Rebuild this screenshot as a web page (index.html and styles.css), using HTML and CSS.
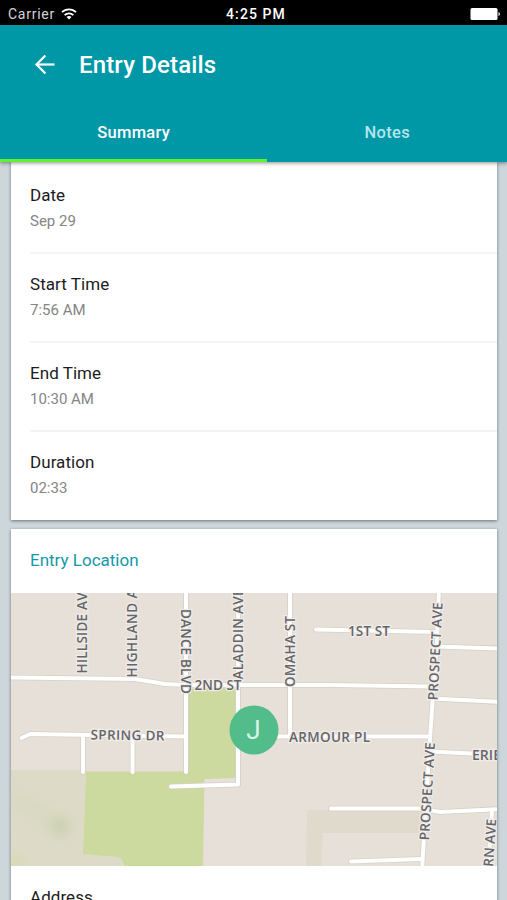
FILE: index.html
```html
<!DOCTYPE html>
<html lang="en">
<head>
  <meta charset="UTF-8" />
  <meta name="viewport" content="width=device-width, initial-scale=1.0" />
  <title>Entry Details</title>
  <link rel="stylesheet" href="styles.css">
</head>
<body>
  <div class="status-bar">
    <div class="status-left">
      <span class="carrier">Carrier</span>
      <svg class="wifi" width="16" height="12" viewBox="0 0 16 12" fill="none" stroke="#fff" stroke-width="1.8">
        <path d="M1 4.2a10 10 0 0 1 14 0" />
        <path d="M3.6 7.1a6.3 6.3 0 0 1 8.8 0" />
        <path d="M8 11.6 5.5 9.1a3.6 3.6 0 0 1 5 0z" fill="#fff" stroke="none" />
      </svg>
    </div>
    <span class="clock">4:25 PM</span>
    <svg class="battery" width="31" height="12" viewBox="0 0 31 12" fill="#fff">
      <rect x="0.5" y="0" width="27" height="12" rx="1.5" />
      <path d="M28.5 4v4c1.8-.5 1.8-3.5 0-4z" />
    </svg>
  </div>

  <header>
    <div class="toolbar">
      <svg class="back" width="20" height="20" viewBox="0 0 20 20" fill="none" stroke="#fff" stroke-width="2.2">
        <path d="M19.5 9.500H2" />
        <path d="M10.400 .5 1.500 9.500l8.900 9" />
      </svg>
      <h1>Entry Details</h1>
    </div>
    <nav>
      <a class="tab active">Summary</a>
      <a class="tab">Notes</a>
    </nav>
  </header>

  <main>
    <section class="card">
      <div class="item">
        <p class="label">Date</p>
        <p class="value">Sep 29</p>
      </div>
      <div class="item">
        <p class="label">Start Time</p>
        <p class="value">7:56 AM</p>
      </div>
      <div class="item">
        <p class="label">End Time</p>
        <p class="value">10:30 AM</p>
      </div>
      <div class="item">
        <p class="label">Duration</p>
        <p class="value">02:33</p>
      </div>
    </section>

    <section class="card location">
      <h2>Entry Location</h2>
      <svg class="map" width="486" height="273" viewBox="11 593 486 273">
        <defs>
          <filter id="soft" x="-80%" y="-80%" width="260%" height="260%"><feGaussianBlur stdDeviation="6" /></filter>
          <g id="roads">
            <path d="M5 677.500 L135 679 L165 684 L186 685 H330 L430 686.500" />
            <path d="M186 588V772" />
            <path d="M238 588V784.500L171 786.500" />
            <path d="M290 588V736" />
            <path d="M316 629.500L436 632" />
            <path d="M439 588L437 640L430 738L422 870" />
            <path d="M436 646.500L500 648.500" />
            <path d="M432 698.500L500 702" />
            <path d="M21.500 738L30 734L186 736.500" />
            <path d="M83 735V772" />
            <path d="M132.500 736V772" />
            <path d="M270 736.500H430" />
            <path d="M430 751.500L500 755" />
            <path d="M331 808.500L420 808.500L440 812L500 809" />
            <path d="M492 810L488 870" />
            <path d="M351 861.500L422 859" />
          </g>
        </defs>
        <rect x="11" y="593" width="486" height="273" fill="#e7e0d8" />

        <!-- parks -->
        <path d="M11 770H86L83 854L118 857Q123 859 123 866H11z" fill="#dddbc8" />
        <g filter="url(#soft)">
          <path d="M11 788L38 800L76 822L60 836L25 815L11 808z" fill="#d2d7b7" opacity=".4" />
          <circle cx="60" cy="827" r="10" fill="#c5cda9" opacity=".7" />
          <circle cx="16" cy="860" r="8" fill="#dad8b4" />
        </g>
        <path d="M188 688H237V778L204.500 779L203 866H124Q123 858 117 857L83 854L86 771.500H188z" fill="#ccd99f" />
        <path d="M307 810H424L422 833H323L321 866H306z" fill="#dfdacb" />

        <use href="#roads" class="road-edge" />
        <use href="#roads" class="road" />

        <g class="street">
          <text transform="translate(86.500 673.500) rotate(-90)" textLength="89">HILLSIDE AVE</text>
          <text transform="translate(137 677.500) rotate(-90)" textLength="105">HIGHLAND AVE</text>
          <text transform="translate(181 609) rotate(90)" textLength="85">DANCE BLVD</text>
          <text transform="translate(242.500 679.500) rotate(-90)" textLength="91">ALADDIN AVE</text>
          <text transform="translate(295 687) rotate(-90)" textLength="71">OMAHA ST</text>
          <text transform="translate(437.500 700.500) rotate(-87)" textLength="98">PROSPECT AVE</text>
          <text transform="translate(429 840.500) rotate(-86.500)" textLength="98">PROSPECT AVE</text>
          <text transform="translate(493 867) rotate(-86)" textLength="48">RN AVE</text>
          <text x="348" y="635.500" textLength="42">1ST ST</text>
          <text x="194.500" y="690" textLength="47">2ND ST</text>
          <text transform="translate(90.500 739.500) rotate(.8)" textLength="74">SPRING DR</text>
          <text x="289" y="741.500" textLength="81">ARMOUR PL</text>
          <text x="472" y="759.500" textLength="29" lengthAdjust="spacingAndGlyphs">ERIE</text>
        </g>

        <circle cx="254" cy="730" r="24.500" fill="#52bc8b" />
        <text class="pin" x="253.500" y="738.500">J</text>
      </svg>
      <div class="item">
        <p class="label">Address</p>
      </div>
    </section>
  </main>
</body>
</html>
```
FILE: styles.css
```css
body {
  margin: 0;
  height: 900px;
  overflow: hidden;
  display: flex;
  flex-direction: column;
  font-family: Roboto, sans-serif;
  background-color: #cdd6da;
  color: #1c1c1c;
}

h1, h2, p {
  margin: 0;
}

.status-bar {
  flex: none;
  height: 25px;
  box-sizing: border-box;
  padding: 2px 6px 0 8px;
  display: grid;
  grid-template-columns: 1fr auto 1fr;
  align-items: center;
  background-color: #000;
  color: #fff;
  font-size: 14px;
}

.status-left {
  display: flex;
  align-items: center;
  gap: 6px;
}

.carrier {
  color: #d5d5d5;
  letter-spacing: 0.75px;
}

.clock {
  margin-left: 3px;
  font-weight: 500;
  letter-spacing: 1.1px;
}

.battery {
  justify-self: end;
}

header {
  position: relative;
  z-index: 2;
  flex: none;
  height: 137px;
  display: flex;
  flex-direction: column;
  background-color: #0097a7;
  color: #fff;
  box-shadow: 0 1px 4px rgba(0, 0, 0, 0.45);
}

.toolbar {
  height: 79px;
  padding-left: 35px;
  display: flex;
  align-items: center;
  gap: 24px;
}

h1 {
  padding-top: 1px;
  font-size: 24px;
  font-weight: 500;
  letter-spacing: 0.15px;
}

nav {
  flex: 1;
  display: flex;
}

.tab {
  width: 240px;
  box-sizing: border-box;
  padding-top: 19px;
  text-align: center;
  font-size: 16.5px;
  line-height: 20px;
  font-weight: 500;
  letter-spacing: 0.3px;
  color: #b5e5ec;
}

.tab.active {
  width: 268px;
  color: #fff;
  border-bottom: 3px solid #64f031;
}

main {
  padding: 0 10px 0 11px;
}

.card {
  background-color: #fff;
  box-shadow: 0 1px 3px rgba(50, 65, 70, 0.65);
}

.item {
  height: 89px;
  box-sizing: border-box;
  margin-left: 19px;
  padding-top: 18px;
  border-top: 2px solid #f4f4f4;
}

.item:first-child {
  height: 90px;
  padding-top: 19px;
  border-top-color: transparent;
}

.item:last-child {
  height: 90px;
}

.label {
  font-size: 17px;
  line-height: 24px;
  letter-spacing: 0.05px;
}

.value {
  margin-top: 3px;
  font-size: 15px;
  line-height: 22px;
  color: #858585;
}

.location {
  margin-top: 9px;
}

h2 {
  height: 64px;
  padding-left: 19px;
  font-size: 17px;
  line-height: 62px;
  font-weight: 400;
  color: #1399a8;
}

.location .item {
  padding-top: 17px;
  border-top-color: transparent;
}

.map {
  display: block;
}

.road-edge,
.road {
  fill: none;
  stroke-linecap: round;
  stroke-linejoin: round;
}

.road-edge {
  stroke: #d6d0c8;
  stroke-width: 5.6px;
}

.road {
  stroke: #fff;
  stroke-width: 4px;
}

.street {
  font-family: "Open Sans", sans-serif;
  font-size: 13.5px;
  font-weight: 600;
  fill: #65666b;
  stroke: #f0ece7;
  stroke-width: 2.5px;
  paint-order: stroke;
}

.pin {
  font-size: 26px;
  fill: #d9f5e8;
  text-anchor: middle;
}
```
